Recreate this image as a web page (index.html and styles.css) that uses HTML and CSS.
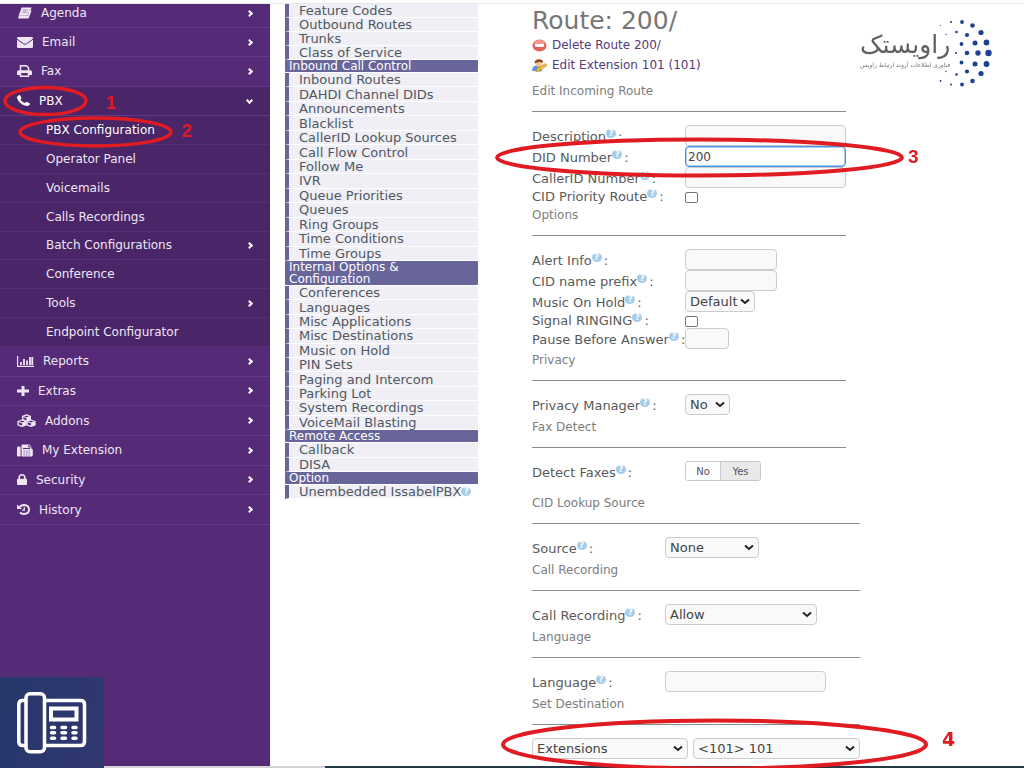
FILE: index.html
```html
<!DOCTYPE html>
<html lang="en">
<head>
<meta charset="utf-8">
<title>Route: 200/</title>
<link rel="stylesheet" href="styles.css">
</head>
<body>
<div class="page">
  <div class="topline"></div>
  <div class="columns">
    <nav class="sidebar">
      <ul class="group group-top">
        <li><a href="#"><svg width="15" height="12" viewBox="0 0 15 12"><path d="M4.5 1h9.3L11 9.6H2.2q-1.200 1.200 0 1.300h9L14 3.500" fill="none" stroke="currentColor" stroke-width="1.100"/><path d="M4.500 1h8.700L10.500 8.800H1.500z" fill="currentColor"/><path d="M6 3.200h4.500M5.400 5.200h4.500" stroke="#552b77" stroke-width=".5"/></svg>Agenda</a><i class="chev"></i></li>
      </ul>
      <ul class="group group-main">
        <li><a href="#"><svg width="16" height="11" viewBox="0 0 16 11"><rect width="16" height="11" rx="1.200" fill="currentColor"/><path d="M0 2.200l6.500 4.600q1.500 1 3 0L16 2.200" fill="none" stroke="#552b77"/></svg>Email</a><i class="chev"></i></li>
        <li><a href="#"><svg width="15" height="12" viewBox="0 0 15 12"><path d="M3.500 6V.8h6l2 2V6" fill="none" stroke="currentColor" stroke-width="1.500"/><path d="M0 10V7q0-1.700 1.700-1.700h11.600Q15 5.300 15 7v3h-3V8H3v2z" fill="currentColor"/><path d="M3.500 8v3.200h8V8" fill="none" stroke="currentColor" stroke-width="1.500"/></svg>Fax</a><i class="chev"></i></li>
        <li class="open"><a href="#"><svg width="13" height="11" viewBox="0 0 13 11"><path d="M.3 1.600Q1 .2 2.700 0q.6 0 1.800 2.900Q3.900 4 3.400 4.500 5 7 8 8.100l1.300-1.200q.5-.3 3.500 1.500.4.900-.6 1.900-1.500 1-4.200.3Q2 8.600.2 3.500q-.3-1.200.1-1.900z" fill="currentColor"/></svg>PBX</a><i class="chev down"></i></li>
      </ul>
      <ul class="group group-sub open">
        <li class="current"><a href="#">PBX Configuration</a></li>
        <li><a href="#">Operator Panel</a></li>
        <li><a href="#">Voicemails</a></li>
        <li><a href="#">Calls Recordings</a></li>
        <li><a href="#">Batch Configurations</a><i class="chev"></i></li>
        <li><a href="#">Conference</a></li>
        <li><a href="#">Tools</a><i class="chev"></i></li>
        <li><a href="#">Endpoint Configurator</a></li>
      </ul>
      <ul class="group group-rest">
        <li><a href="#"><svg width="17" height="11" viewBox="0 0 17 11"><path d="M.6 0v10.400H17" fill="none" stroke="currentColor" stroke-width="1.200"/><path d="M4 9V6M7 9V3M10 9V4.500M13 9V1M15.300 9V1" stroke="currentColor" stroke-width="1.800"/></svg>Reports</a><i class="chev"></i></li>
        <li><a href="#"><svg width="12" height="10" viewBox="0 0 12 10"><path d="M6 0v10M0 5h12" stroke="currentColor" stroke-width="3"/></svg>Extras</a><i class="chev"></i></li>
        <li><a href="#"><svg width="19" height="13" viewBox="0 0 19 13"><g fill="#552b77" stroke="currentColor" stroke-width="1.300" stroke-linejoin="round"><path d="M9.500.8l3.800 1.500v3.400L9.500 7.200 5.700 5.700V2.300z"/><path d="M5 6l4 1.500v3.300L5 12.300 1 10.800V7.500z"/><path d="M14 6l4 1.500v3.300l-4 1.500-4-1.500V7.500z"/></g><path d="M9.500 3.800l3.800-1.500v3.400L9.500 7.200zM5 9l4-1.500v3.300l-4 1.500zM14 9l4-1.500v3.300l-4 1.500z" fill="currentColor"/><path d="M5.700 2.300l3.800 1.500 3.800-1.500M1 7.500L5 9l4-1.500M10 7.500L14 9l4-1.500" fill="none" stroke="currentColor"/></svg>Addons</a><i class="chev"></i></li>
        <li><a href="#"><svg width="16" height="13" viewBox="0 0 16 13"><rect y="2.500" width="3.600" height="10" rx="1.200" fill="currentColor"/><path d="M4.500 12.500V1.200Q4.500.4 5.400.4h6.900l2 2v2q1.500.3 1.500 1.700v5q0 1.400-1.500 1.400z" fill="currentColor"/><path d="M6 4.500h7M11.800 1v2h2" fill="none" stroke="#552b77"/><path d="M6.500 7h1.300M9 7h1.300M11.500 7h1.300M6.500 9h1.300M9 9h1.300M11.500 9h1.300M6.500 11h1.300M9 11h1.300M11.500 11h1.300" stroke="#552b77" stroke-width=".7"/></svg>My Extension</a><i class="chev"></i></li>
        <li><a href="#"><svg width="10" height="11" viewBox="0 0 10 11"><rect y="4.800" width="10" height="6.200" rx="1" fill="currentColor"/><path d="M2.200 5V3.500Q2.200.8 5 .8t2.800 2.700V5" fill="none" stroke="currentColor" stroke-width="1.600"/></svg>Security</a><i class="chev"></i></li>
        <li><a href="#"><svg width="13" height="11" viewBox="0 0 13 11"><path d="M2.500 3Q4.500 1 7 1q5 .3 5 4.500T7 10Q4.500 10 3 8.500" fill="none" stroke="currentColor" stroke-width="1.900"/><path d="M0 .6V5h5z" fill="currentColor"/><path d="M7.300 3.200v2.900H5.200" fill="none" stroke="currentColor" stroke-width="1.200"/></svg>History</a><i class="chev"></i></li>
      </ul>
      <div class="phone">
        <svg width="70" height="62" viewBox="0 0 70 62" fill="none" stroke="#fff" stroke-width="3.500"><path d="M8.500 8.500H5.500q-3.700 0-3.700 4v37q0 4 3.700 4h3"/><rect x="9" y="1.800" width="18.500" height="58" rx="4"/><path d="M28 8.500h35.500q4 0 4 4v37q0 4-4 4H28"/><rect x="34" y="16.500" width="25.500" height="11" stroke-width="4"/><g stroke-linecap="round"><path d="M34.500 35.500h3M45 35.500h3.500M56 35.500h3M34.500 40.800h3M45 40.800h3.500M56 40.800h3M34.500 46.200h3M45 46.200h3.500M56 46.200h3"/></g></svg>
      </div>
    </nav>

    <div class="modules">
      <ul class="m4">
        <li><a href="#">Feature Codes</a></li><li><a href="#">Outbound Routes</a></li><li><a href="#">Trunks</a></li><li><a href="#">Class of Service</a></li>
      </ul>
      <h3>Inbound Call Control</h3>
      <ul class="m13">
        <li><a href="#">Inbound Routes</a></li><li><a href="#">DAHDI Channel DIDs</a></li><li><a href="#">Announcements</a></li><li><a href="#">Blacklist</a></li><li><a href="#">CallerID Lookup Sources</a></li><li><a href="#">Call Flow Control</a></li><li><a href="#">Follow Me</a></li><li><a href="#">IVR</a></li><li><a href="#">Queue Priorities</a></li><li><a href="#">Queues</a></li><li><a href="#">Ring Groups</a></li><li><a href="#">Time Conditions</a></li><li><a href="#">Time Groups</a></li>
      </ul>
      <h3>Internal Options &amp; Configuration</h3>
      <ul class="m10">
        <li><a href="#">Conferences</a></li><li><a href="#">Languages</a></li><li><a href="#">Misc Applications</a></li><li><a href="#">Misc Destinations</a></li><li><a href="#">Music on Hold</a></li><li><a href="#">PIN Sets</a></li><li><a href="#">Paging and Intercom</a></li><li><a href="#">Parking Lot</a></li><li><a href="#">System Recordings</a></li><li><a href="#">VoiceMail Blasting</a></li>
      </ul>
      <h3>Remote Access</h3>
      <ul class="m2">
        <li><a href="#">Callback</a></li><li><a href="#">DISA</a></li>
      </ul>
      <h3>Option</h3>
      <ul>
        <li class="plain"><a href="#">Unembedded IssabelPBX</a><span class="help">?</span></li>
      </ul>
    </div>

    <main class="content">
      <h1>Route: 200/</h1>
      <a class="action" href="#"><svg width="15" height="13" viewBox="0 0 15 13"><ellipse cx="7.500" cy="6.500" rx="7" ry="6" fill="#e2605a"/><ellipse cx="7.500" cy="4" rx="5.500" ry="3" fill="#f09a90"/><rect x="3" y="5" width="9" height="3" rx="1" fill="#fff"/></svg>Delete Route 200/</a>
      <a class="action" href="#"><svg width="15" height="13" viewBox="0 0 15 13"><path d="M0 12q0-5 4-5.500l5 1 1 5z" fill="#5e9bd8"/><circle cx="6.800" cy="4.500" r="3.200" fill="#f3c69a"/><path d="M2.500 4.500Q2.500.3 7 .3t4 3.700Q8 2.500 5 3.500z" fill="#8a4a24"/><path d="M5 9.500l8.500-5 1.300 2L7 12l-3 .7z" fill="#f2b93c" stroke="#b8801f" stroke-width=".6"/></svg>Edit Extension 101 (101)</a>
      <form>
        <div class="narrow">
          <h2>Edit Incoming Route</h2>
          <div class="row"><label for="desc">Description<span class="help">?</span>:</label><input class="wide" id="desc" type="text"></div>
          <div class="row"><label for="did">DID Number<span class="help">?</span>:</label><input class="wide active" id="did" type="text" value="200" autofocus></div>
          <div class="row"><label for="cid">CallerID Number<span class="help">?</span>:</label><input class="wide" id="cid" type="text"></div>
          <div class="row check"><label for="prio">CID Priority Route<span class="help">?</span>:</label><input id="prio" type="checkbox"></div>
          <h2>Options</h2>
          <div class="row"><label for="alert">Alert Info<span class="help">?</span>:</label><input class="mid" id="alert" type="text"></div>
          <div class="row"><label for="prefix">CID name prefix<span class="help">?</span>:</label><input class="mid" id="prefix" type="text"></div>
          <div class="row"><label for="moh">Music On Hold<span class="help">?</span>:</label><select class="w70" id="moh"><option>Default</option></select></div>
          <div class="row check"><label for="ring">Signal RINGING<span class="help">?</span>:</label><input id="ring" type="checkbox"></div>
          <div class="row"><label for="pause">Pause Before Answer<span class="help">?</span>:</label><input class="small" id="pause" type="text"></div>
          <h2>Privacy</h2>
          <div class="row single"><label for="pm">Privacy Manager<span class="help">?</span>:</label><select class="w45" id="pm"><option>No</option></select></div>
          <h2>Fax Detect</h2>
          <div class="row tall"><span class="label" id="faxlabel">Detect Faxes<span class="help">?</span>:</span><div class="toggle" role="group" aria-labelledby="faxlabel"><button type="button" class="on">No</button><button type="button">Yes</button></div></div>
        </div>
        <div class="broad">
          <h2>CID Lookup Source</h2>
          <div class="row single"><label for="src">Source<span class="help">?</span>:</label><select class="w94" id="src"><option>None</option></select></div>
          <h2>Call Recording</h2>
          <div class="row single"><label for="rec">Call Recording<span class="help">?</span>:</label><select class="w152" id="rec"><option>Allow</option></select></div>
          <h2>Language</h2>
          <div class="row single"><label for="lang">Language<span class="help">?</span>:</label><input class="wide" id="lang" type="text"></div>
          <h2>Set Destination</h2>
          <div class="dest"><select aria-label="Destination type"><option>Extensions</option></select><select aria-label="Destination"><option>&lt;101&gt; 101</option></select></div>
        </div>
      </form>
    </main>

    <div class="brand" lang="fa" dir="rtl">
      <svg class="dots" width="58" height="68" viewBox="0 0 58 68" fill="#1f3f8f"><circle cx="16" cy="3" r="1"/><circle cx="27" cy="3" r="1.900"/><circle cx="37.500" cy="6.500" r="2.300"/><circle cx="46" cy="13.500" r="2.600"/><circle cx="21.500" cy="13" r="1.300"/><circle cx="32" cy="16" r="2.100"/><circle cx="40" cy="24" r="2.500"/><circle cx="51.500" cy="23.500" r="2.900"/><circle cx="26.500" cy="25" r="1.900"/><circle cx="21" cy="34" r="1"/><circle cx="32" cy="34" r="2.300"/><circle cx="43" cy="34" r="2.700"/><circle cx="53.500" cy="34" r="3.200"/><circle cx="26.500" cy="43.500" r="1.900"/><circle cx="40" cy="45" r="2.500"/><circle cx="51.500" cy="45" r="2.900"/><circle cx="32" cy="52.500" r="2.100"/><circle cx="21.500" cy="55.500" r="1.300"/><circle cx="46" cy="54.500" r="2.600"/><circle cx="37.500" cy="62" r="2.300"/><circle cx="27" cy="65.500" r="1.900"/><circle cx="16" cy="65.500" r="1"/><circle cx="5.500" cy="62" r=".9"/><circle cx="5.500" cy="6.500" r=".6"/><circle cx="11" cy="15.500" r=".7"/><circle cx="11" cy="52.500" r=".7"/></svg>
      <div class="wordmark"><strong>راویستک</strong><small>فناوری اطلاعات آروند ارتباط راویس</small></div>
    </div>
  </div>
  <div class="bottomline"></div>

  <svg class="marks" width="1024" height="768" viewBox="0 0 1024 768" fill="none" stroke="#e01b22" stroke-width="4"><ellipse cx="45.500" cy="101" rx="40.500" ry="13.500" stroke-width="3.500"/><ellipse cx="95.500" cy="132" rx="75.500" ry="14" stroke-width="3.500"/><ellipse cx="699.500" cy="157.500" rx="202.500" ry="18"/><ellipse cx="714.500" cy="744.500" rx="211.500" ry="24"/></svg>
  <b class="num n1">1</b><b class="num n2">2</b><b class="num n3">3</b><b class="num n4">4</b>
</div>
</body>
</html>
```
FILE: styles.css
```css
* { box-sizing: border-box; }
body { margin: 0; background: #fff; font-family: "DejaVu Sans", Verdana, sans-serif; font-size: 13px; color: #5a5a5a; }
ul { list-style: none; margin: 0; padding: 0; }
a { color: inherit; text-decoration: none; }
.page { position: relative; display: flex; flex-direction: column; min-height: 100vh; overflow: hidden; }
.topline { height: 4px; border-bottom: 1px solid #e6e6e6; }
.bottomline { height: 2px; background: linear-gradient(to right, #d4d4d8 325px, #263a48 325px); }
.columns { display: flex; flex: 1; }

.sidebar { flex: 0 0 270px; display: flex; flex-direction: column; background: #552b77; color: #eee6f5; font-size: 12px; }
.group { display: grid; grid-auto-rows: 1fr; }
.group li { display: flex; align-items: center; justify-content: space-between; padding: 0 18px 0 17px; border-bottom: 1px solid #623a86; }
.group a { display: flex; align-items: center; gap: 9px; }
.group-top { min-height: 24px; }
.group-top li { padding-bottom: 5px; }
.group-main { min-height: 88px; }
.group-sub { min-height: 231px; }
.group-rest { min-height: 178px; }
.open { background: #4a2568; }
.group-sub li { padding-left: 46px; border-bottom-color: #55307a; }
.group .current, .group li.open { color: #fff; }
.chev { width: 5px; height: 5px; border: solid #fff; border-width: 2px 2px 0 0; transform: rotate(45deg); }
.chev.down { transform: rotate(135deg); }
.phone { display: flex; align-items: center; justify-content: center; width: 104px; height: 91px; margin: auto 0 -2px; background: linear-gradient(100deg, #26386b, #30376f); z-index: 1; }

.modules { flex: 0 0 193px; margin-left: 15px; color: #505862; }
.modules ul { display: grid; grid-auto-rows: 1fr; }
.modules li { display: flex; align-items: center; min-height: 14px; line-height: 13px; padding-left: 10px; border-left: 4px solid #67659a; border-bottom: 1px solid #fff; background: #efeff5; }
.modules .plain { background: linear-gradient(to right, #efeff5 168px, #fff 168px); }
.modules h3 { margin: 0 0 1px; padding: 0 4px; background: #67659a; color: #fff; font-size: 12px; font-weight: 400; line-height: 12px; border-radius: 1px; }
.modules .m4 { min-height: 55px; }
.modules .m13 { min-height: 188px; }
.modules .m10 { min-height: 144px; }
.modules .m2 { min-height: 29px; }

.help { display: inline-block; width: 10px; height: 9px; margin-right: 2px; border-radius: 50%; background: #a5cdeb; color: #fff; font-size: 8px; font-weight: 700; line-height: 9px; text-align: center; vertical-align: 5px; }

.content { flex: 0 1 328px; margin-left: 54px; }
h1 { margin: 0; padding-top: 3px; font-size: 25px; font-weight: 400; line-height: 28px; color: #777; }
.action { display: flex; align-items: center; gap: 5px; height: 20px; font-size: 12px; color: #563a78; }
form { margin-top: 5px; }
.narrow { margin-right: 14px; }
h2 { margin: 0 0 13px; padding-bottom: 9px; border-bottom: 1px solid #8c8c8c; font-size: 12px; font-weight: 400; line-height: 22px; color: #7d7d7d; }
.row { display: grid; grid-template-columns: 153px 1fr; align-items: start; min-height: 21px; }
.broad .row { grid-template-columns: 133px 1fr; }
.row label, .label { line-height: 17px; padding-top: 3px; white-space: nowrap; }
.row.single { min-height: 22px; }
.row.tall { min-height: 31px; }
.row.check { height: 16px; min-height: 16px; }
.row.check label { padding-top: 0; }
input, select, button { font: inherit; color: #444; margin: 0; }
input[type=text], select { height: 21px; border: 1px solid #ccc; border-radius: 4px; background: #f9f9f9; padding: 0 2px; outline: none; }
input[type=checkbox] { width: 13px; height: 11px; margin-top: 4px; appearance: none; border: 1px solid #767676; border-radius: 2px; background: #fff; }
.wide { width: 161px; }
.mid { width: 92px; }
.small { width: 44px; }
input.active { border-color: #4a90e2; background: #fff; box-shadow: inset 0 0 0 1px #a9cdf3; font-size: 12px; }
select { appearance: none; padding-left: 4px; background: #f9f9f9 url("data:image/svg+xml,%3Csvg xmlns='http://www.w3.org/2000/svg' width='10' height='7'%3E%3Cpath d='M1 1.500L5 5L9 1.500' fill='none' stroke='%23222' stroke-width='2'/%3E%3C/svg%3E") no-repeat right 4px center; }
.w70 { width: 70px; }
.w45 { width: 45px; }
.w94 { width: 94px; }
.w152 { width: 152px; }
.toggle { display: flex; width: 76px; height: 20px; border: 1px solid #c8c8c8; border-radius: 3px; overflow: hidden; }
.toggle button { flex: 1; border: 0; padding: 0; font-size: 10px; color: #555; background: #e9e9e9; }
.toggle button.on { flex: 0 0 35px; background: #fff; border-right: 1px solid #ccc; }
.dest { display: grid; grid-template-columns: 156px 1fr; gap: 5px; }

.brand { display: flex; align-items: flex-start; margin: 15px 32px 0 auto; direction: rtl; }
.dots { flex: none; margin-left: -15px; }
.wordmark { display: flex; flex-direction: column; color: #5f5f5f; padding-top: 11px; white-space: nowrap; }
.wordmark strong { font-size: 25px; font-weight: 400; line-height: 30px; }
.wordmark small { font-size: 6px; line-height: 10px; color: #777; }

.marks { position: absolute; left: 0; top: 0; pointer-events: none; }
.num { position: absolute; font: 700 19px/20px "Liberation Sans", Arial, sans-serif; color: #e01b22; }
.n1 { left: 106px; top: 93px; }
.n2 { left: 182px; top: 121px; }
.n3 { left: 908px; top: 147px; }
.n4 { left: 942px; top: 729px; font-family: "DejaVu Sans", Verdana, sans-serif; }
```
